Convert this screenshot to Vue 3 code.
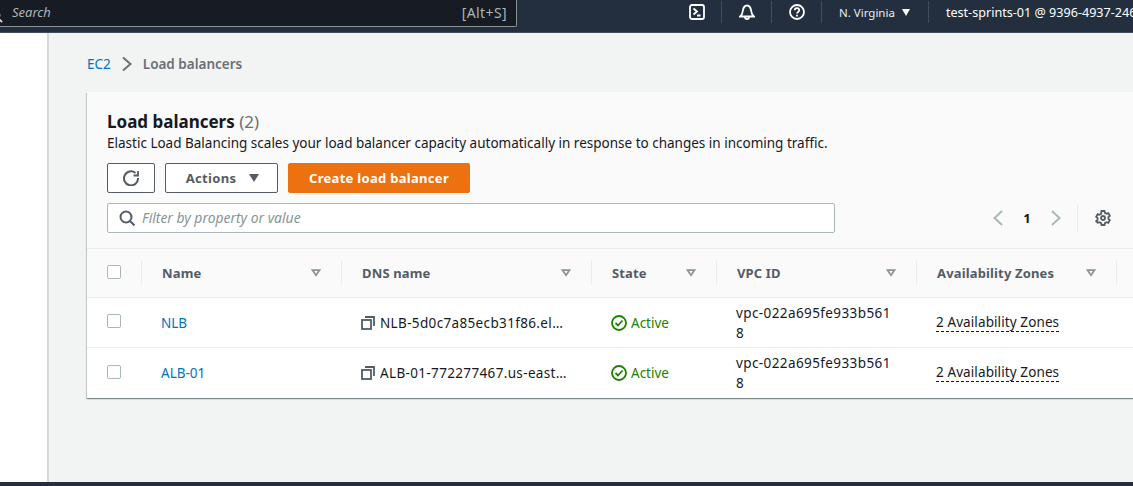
<template>
  <div class="page">
    <header class="topbar">
      <div class="search">
        <svg class="search-icon" width="14" height="14" viewBox="0 0 16 16"><circle cx="7" cy="7" r="5" fill="none" stroke="#d5dbdb" stroke-width="2" /><path d="M11 11l4 4" stroke="#d5dbdb" stroke-width="2" /></svg>
        <span class="search-text">Search</span>
        <span class="search-key">[Alt+S]</span>
      </div>
      <div class="top-items">
        <div class="top-item icon-item">
          <svg width="16" height="16" viewBox="0 0 16 16" fill="none" stroke="#fff" stroke-width="1.8">
            <rect x="1" y="1" width="14" height="14" rx="2" />
            <path d="M4.500 4.500L8 7.500 4.500 10.500M8 11.500h3.500" />
          </svg>
        </div>
        <div class="top-item icon-item">
          <svg width="16" height="16" viewBox="0 0 16 16" fill="none" stroke="#fff" stroke-width="1.8">
            <path d="M1 12.500h14c-2-1.500-2.500-3-2.800-5.500C11.800 4 10.500 1.500 8 1.500S4.200 4 3.800 7C3.500 9.500 3 11 1 12.500z" />
            <path d="M6 13a2 2 0 0 0 4 0" />
          </svg>
        </div>
        <div class="top-item icon-item">
          <svg width="16" height="16" viewBox="0 0 16 16" fill="none" stroke="#fff" stroke-width="1.8">
            <circle cx="8" cy="8" r="7" />
            <path d="M5.800 6.300C5.800 5 6.800 4.200 8 4.200s2.200.8 2.200 2c0 1.700-2.200 1.800-2.200 3.400" />
            <path d="M8 10.800v1.700" />
          </svg>
        </div>
        <div class="top-item region">
          <span>N. Virginia</span>
          <svg width="8" height="7" viewBox="0 0 8 7"><path d="M0 0h8L4 7z" fill="#fff" /></svg>
        </div>
        <div class="top-item account">test-sprints-01 @ 9396-4937-2464</div>
      </div>
    </header>

    <div class="body">
      <aside class="sidebar"></aside>
      <main class="main">
        <nav class="crumbs">
          <a class="link">EC2</a>
          <svg width="12" height="16" viewBox="0 0 12 16" fill="none" stroke="#687078" stroke-width="2"><path d="M2 1.500L9.500 8 2 14.500" /></svg>
          <span class="crumb-current">Load balancers</span>
        </nav>

        <section class="card">
          <div class="card-head">
            <h2>Load balancers <span class="count">(2)</span></h2>
            <p class="desc">Elastic Load Balancing scales your load balancer capacity automatically in response to changes in incoming traffic.</p>
            <div class="actions">
              <button class="btn refresh">
                <svg width="16" height="16" viewBox="0 0 16 16" fill="none" stroke="#545b64" stroke-width="2">
                  <path d="M12.500 3A7 7 0 1 0 15 8" />
                  <path d="M15 1v4.500h-4.500" stroke-width="1.800" />
                </svg>
              </button>
              <button class="btn actions-btn">
                Actions
                <svg width="10" height="8" viewBox="0 0 10 8"><path d="M0 0h10L5 8z" fill="#545b64" /></svg>
              </button>
              <button class="btn primary">Create load balancer</button>
            </div>
            <div class="filter-row">
              <div class="filter">
                <svg width="16" height="16" viewBox="0 0 16 16" fill="none" stroke="#545b64" stroke-width="2"><circle cx="7" cy="7" r="5.500" /><path d="M11 11l4.500 4.500" /></svg>
                <span>Filter by property or value</span>
              </div>
              <div class="pager">
                <svg width="12" height="16" viewBox="0 0 12 16" fill="none" stroke="#aab7b8" stroke-width="2"><path d="M10 1L2.500 8 10 15" /></svg>
                <span class="page-num">1</span>
                <svg width="12" height="16" viewBox="0 0 12 16" fill="none" stroke="#aab7b8" stroke-width="2"><path d="M2 1L9.500 8 2 15" /></svg>
                <span class="pager-sep"></span>
                <svg width="16" height="16" viewBox="0 0 16 16" fill="none" stroke="#545b64" stroke-width="1.800">
                  <circle cx="8" cy="8" r="2" />
                  <path d="M6.500 1h3l.4 1.900 1.600.9 1.800-.6 1.500 2.600-1.400 1.300v1.800l1.400 1.300-1.500 2.600-1.800-.6-1.600.9-.4 1.900h-3l-.4-1.900-1.600-.9-1.800.6L1.200 11.200l1.400-1.300V8.100L1.200 6.800 2.700 4.200l1.800.6 1.600-.9z" />
                </svg>
              </div>
            </div>
          </div>

          <div class="table">
            <div class="row head">
              <div class="cell check"><span class="box"></span></div>
              <div v-for="col in columns" :key="col" class="cell th">
                <span>{{ col }}</span>
                <svg width="10" height="8" viewBox="0 0 11 9" fill="none" stroke="#879596" stroke-width="2"><path d="M1.500 1.200h8L5.500 7z" /></svg>
              </div>
            </div>
            <div v-for="lb in balancers" :key="lb.name" class="row">
              <div class="cell check"><span class="box"></span></div>
              <div class="cell"><a class="link">{{ lb.name }}</a></div>
              <div class="cell dns">
                <svg width="14" height="14" viewBox="0 0 14 14" fill="none" stroke="#545b64" stroke-width="1.800">
                  <rect x="1" y="4" width="9" height="9" />
                  <path d="M4 1h9v9" />
                </svg>
                <span class="dns-text">{{ lb.dns }}</span>
              </div>
              <div class="cell state">
                <svg width="16" height="16" viewBox="0 0 16 16" fill="none" stroke="#1d8102" stroke-width="1.800">
                  <circle cx="8" cy="8" r="7" />
                  <path d="M4.500 8l2.500 2.500L11.500 5.500" />
                </svg>
                <span>Active</span>
              </div>
              <div class="cell vpc">vpc-022a695fe933b5618</div>
              <div class="cell"><span class="zones">2 Availability Zones</span></div>
              <div class="cell"></div>
            </div>
          </div>
        </section>
      </main>
    </div>

    <footer class="bottombar"></footer>
  </div>
</template>

<script setup>
const columns = ["Name", "DNS name", "State", "VPC ID", "Availability Zones"];

const balancers = [
  { name: "NLB", dns: "NLB-5d0c7a85ecb31f86.elb.us-east-1.amazonaws.com" },
  { name: "ALB-01", dns: "ALB-01-772277467.us-east-1.elb.amazonaws.com" },
];
</script>

<style>
html,
body {
  margin: 0;
  overflow: hidden;
}
</style>

<style scoped>
.page {
  display: flex;
  flex-direction: column;
  height: 486px;
  width: 1133px;
  overflow: hidden;
  font-family: "Noto Sans", sans-serif;
  font-size: 13.500px;
  color: #16191f;
  background: #f2f3f3;
}

.topbar {
  flex: none;
  display: flex;
  height: 33px;
  box-sizing: border-box;
  background: #232f3e;
  border-bottom: 1px solid #414d5c;
  color: #fff;
}

.search {
  flex: none;
  display: flex;
  align-items: center;
  width: 527px;
  height: 27px;
  margin-left: -10px;
  padding-right: 9px;
  box-sizing: border-box;
  background: #161b24;
  border: 1px solid #879596;
  border-top: 0;
  border-radius: 0 0 2px 2px;
  color: #aab7b8;
  font-size: 13px;
}

.search-icon {
  flex: none;
  margin-left: -2px;
  margin-top: 5px;
}

.search-text {
  margin-left: 9px;
  margin-top: -2px;
  font-style: italic;
}

.search-key {
  margin-left: auto;
  margin-top: -2px;
  font-size: 14px;
  letter-spacing: 0.4px;
}

.top-items {
  display: flex;
  align-items: center;
  margin-left: 155px;
  height: 24px;
  white-space: nowrap;
}

.top-item {
  display: flex;
  align-items: center;
  height: 22px;
  border-right: 1px solid #414d5c;
}

.icon-item {
  width: 49px;
  justify-content: center;
}

.region {
  gap: 7px;
  padding: 0 18px 0 17px;
  font-size: 11.500px;
  color: #eaeded;
}

.account {
  padding-left: 17px;
  border-right: 0;
  font-size: 12.600px;
}

.body {
  flex: 1;
  display: flex;
  min-height: 0;
}

.sidebar {
  flex: none;
  width: 47px;
  background: #fff;
  border-right: 2px solid #d5dbdb;
}

.main {
  flex: 1;
  min-width: 0;
  overflow: hidden;
  padding: 0 0 0 38px;
}

.crumbs {
  display: flex;
  align-items: center;
  gap: 10px;
  height: 59px;
  padding-top: 3px;
  box-sizing: border-box;
}

.link {
  color: #0073bb;
}

.crumb-current {
  color: #687078;
  font-weight: 600;
}

.card {
  width: 1100px;
  background: #fff;
  box-shadow: 0 1px 1px 0 rgba(0, 28, 36, 0.3), 1px 1px 1px 0 rgba(0, 28, 36, 0.15), -1px 1px 1px 0 rgba(0, 28, 36, 0.15);
}

.card-head {
  height: 157px;
  box-sizing: border-box;
  padding: 18px 20px 0;
  background: #fafafa;
  border-bottom: 1px solid #eaeded;
}

h2 {
  margin: 0;
  font-size: 17px;
  line-height: 24px;
  font-weight: 700;
}

.count {
  color: #687078;
  font-weight: 400;
}

.desc {
  margin: 0;
  line-height: 18px;
}

.actions {
  display: flex;
  gap: 10px;
  margin-top: 11px;
}

.btn {
  display: flex;
  align-items: center;
  justify-content: center;
  height: 30px;
  box-sizing: border-box;
  font-family: inherit;
  font-size: 13px;
  font-weight: 700;
  letter-spacing: 0.3px;
  background: #fff;
  border: 1px solid #545b64;
  border-radius: 2px;
  color: #545b64;
}

.refresh {
  width: 48px;
}

.actions-btn {
  width: 113px;
  gap: 13px;
  padding: 0 0 0 2px;
}

.primary {
  width: 182px;
  background: #ec7211;
  border-color: #ec7211;
  color: #fff;
}

.filter-row {
  display: flex;
  align-items: center;
  margin-top: 10px;
}

.filter {
  display: flex;
  align-items: center;
  gap: 7px;
  width: 728px;
  height: 30px;
  box-sizing: border-box;
  padding-left: 11px;
  background: #fff;
  border: 1px solid #aab7b8;
  border-radius: 2px;
  color: #879596;
  font-style: italic;
  font-size: 13.900px;
}

.filter svg {
  flex: none;
}

.filter span {
  margin-top: -1px;
}

.pager {
  display: flex;
  align-items: center;
  margin-left: 157px;
}

.page-num {
  width: 46px;
  text-align: center;
  font-size: 13px;
  font-weight: 700;
}

.pager-sep {
  width: 1px;
  height: 28px;
  margin: 0 17px 0 15px;
  background: #eaeded;
}

.row {
  display: grid;
  grid-template-columns: 54px 200px 250px 125px 200px 200px 71px;
  height: 50px;
  box-sizing: border-box;
  border-bottom: 1px solid #eaeded;
}

.row:last-child {
  border-bottom: 0;
}

.row.head {
  height: 49px;
  background: #fafafa;
}

.cell {
  display: flex;
  align-items: center;
  min-width: 0;
  box-sizing: border-box;
  padding: 0 20px;
}

.th {
  position: relative;
  justify-content: space-between;
  padding: 0 20px 0 21px;
  color: #545b64;
  font-size: 13px;
  letter-spacing: 0.15px;
  font-weight: 700;
}

.th svg {
  flex: none;
}

.th::before {
  content: "";
  position: absolute;
  left: 0;
  top: 11px;
  bottom: 12px;
  width: 1px;
  background: #eaeded;
}

.row.head .th:last-child::after {
  content: "";
  position: absolute;
  right: -1px;
  top: 11px;
  bottom: 12px;
  width: 1px;
  background: #eaeded;
}

.check {
  padding: 0 0 3px 20px;
}

.box {
  flex: none;
  width: 14px;
  height: 14px;
  box-sizing: border-box;
  background: #fff;
  border: 1px solid #aab7b8;
  border-radius: 2px;
}

.dns {
  gap: 5px;
}

.dns svg {
  flex: none;
}

.dns-text {
  overflow: hidden;
  white-space: nowrap;
  text-overflow: ellipsis;
  letter-spacing: 0.35px;
}

.state {
  gap: 4px;
  color: #1d8102;
}

.state svg {
  flex: none;
}

.vpc {
  padding-right: 20px;
  line-height: 20px;
  letter-spacing: 0.4px;
  word-break: break-all;
}

.zones {
  border-bottom: 1px dashed #16191f;
  line-height: 17px;
  white-space: nowrap;
  letter-spacing: 0.1px;
}

.bottombar {
  flex: none;
  height: 4px;
  background: #232f3e;
}
</style>
